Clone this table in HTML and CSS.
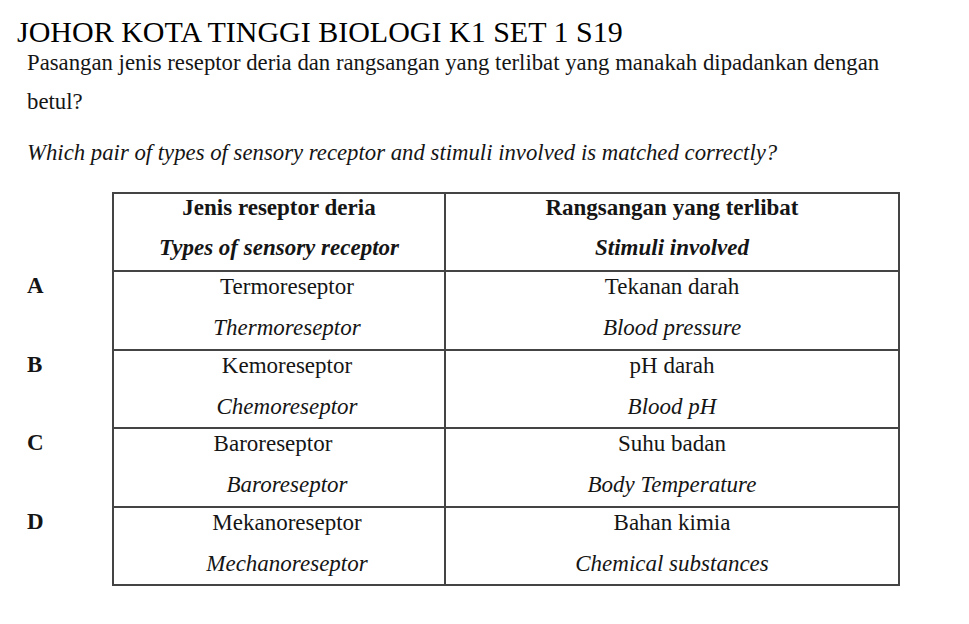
FILE: index.html
```html
<!DOCTYPE html>
<html>
<head>
<meta charset="utf-8">
<link rel="stylesheet" href="styles.css">
</head>
<body>
<div class="page">
  <h1 class="title">JOHOR KOTA TINGGI BIOLOGI K1 SET 1 S19</h1>
  <p class="q">Pasangan jenis reseptor deria dan rangsangan yang terlibat yang manakah dipadankan dengan betul?</p>
  <p class="q-en">Which pair of types of sensory receptor and stimuli involved is matched correctly?</p>
  <table class="opts">
    <colgroup>
      <col class="c-letter">
      <col class="c-recep">
      <col class="c-stim">
    </colgroup>
    <tr class="head">
      <td class="letter"></td>
      <td class="cell"><div class="l1 b">Jenis reseptor deria</div><div class="l2 bi">Types of sensory receptor</div></td>
      <td class="cell"><div class="l1 b">Rangsangan yang terlibat</div><div class="l2 bi">Stimuli involved</div></td>
    </tr>
    <tr class="row">
      <td class="letter">A</td>
      <td class="cell recep"><div class="l1">Termoreseptor</div><div class="l2 i">Thermoreseptor</div></td>
      <td class="cell"><div class="l1">Tekanan darah</div><div class="l2 i">Blood pressure</div></td>
    </tr>
    <tr class="row">
      <td class="letter">B</td>
      <td class="cell recep"><div class="l1">Kemoreseptor</div><div class="l2 i">Chemoreseptor</div></td>
      <td class="cell"><div class="l1">pH darah</div><div class="l2 i">Blood pH</div></td>
    </tr>
    <tr class="row">
      <td class="letter">C</td>
      <td class="cell recep"><div class="l1 shift-l">Baroreseptor</div><div class="l2 i">Baroreseptor</div></td>
      <td class="cell"><div class="l1">Suhu badan</div><div class="l2 i">Body Temperature</div></td>
    </tr>
    <tr class="row">
      <td class="letter">D</td>
      <td class="cell recep"><div class="l1">Mekanoreseptor</div><div class="l2 i">Mechanoreseptor</div></td>
      <td class="cell"><div class="l1">Bahan kimia</div><div class="l2 i">Chemical substances</div></td>
    </tr>
  </table>
</div>
</body>
</html>
```

FILE: styles.css
```css
html, body {
  margin: 0;
  padding: 0;
  background: #ffffff;
}
body {
  font-family: "Liberation Serif", "Times New Roman", serif;
  color: #151515;
}
.page {
  padding-top: 20px;
}
.title {
  margin: 0 0 0 17px;
  font-size: 30px;
  font-weight: normal;
  line-height: 24px;
  color: #000;
}
.q {
  margin: -1px 0 0 27px;
  width: 870px;
  font-size: 22.75px;
  line-height: 39px;
}
.q-en {
  margin: 17px 0 0 27px;
  font-size: 22.75px;
  font-style: italic;
  line-height: 30px;
}
.opts {
  border-collapse: collapse;
  table-layout: fixed;
  width: 899px;
  margin-top: 24px;
  font-size: 23px;
}
.c-letter { width: 113px; }
.c-recep { width: 332px; }
.c-stim { width: 454px; }
.letter {
  padding: 0 0 0 27px;
  vertical-align: top;
  font-weight: bold;
  border: none;
  line-height: 26px;
  text-align: left;
}
.row .letter { padding-top: 2px; }
.cell {
  border: 2px solid #444;
  text-align: center;
  vertical-align: top;
  padding: 1px 0 0 0;
  height: 75.4px;
}
.row .cell { padding-top: 2px; height: 74.4px; }
.recep { padding-left: 16px; }
.l1 { line-height: 26px; }
.l2 { line-height: 38px; margin-top: 8px; }
.row .l2 { margin-top: 9px; }
.b { font-weight: bold; }
.bi { font-weight: bold; font-style: italic; }
.i { font-style: italic; }
.shift-l { margin-right: 28px; }
```
